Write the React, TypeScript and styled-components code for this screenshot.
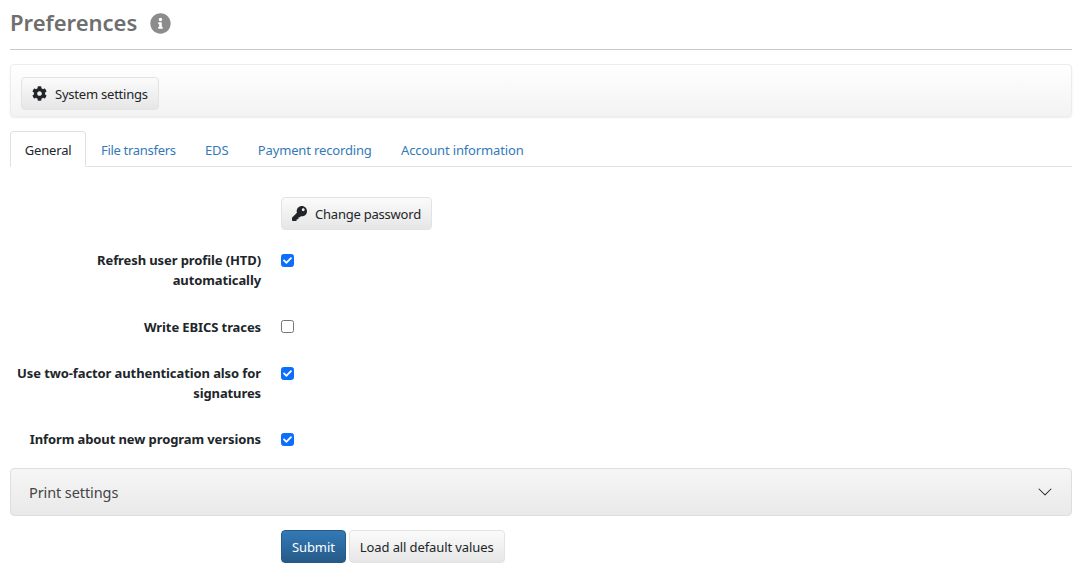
import React from 'react'
import styled, { createGlobalStyle } from 'styled-components'
import { FaCog, FaInfoCircle, FaKey, FaCheck } from 'react-icons/fa'

const GlobalStyle = createGlobalStyle`
  html, body {
    margin: 0;
    padding: 0;
    background: #fff;
    font-family: "Noto Sans", "Open Sans", sans-serif;
    font-size: 13px;
    letter-spacing: -0.1px;
    color: #212529;
  }
`

const Page = styled.div`
  padding: 0 8px 0 10px;
  height: 579px;
  box-sizing: border-box;
  overflow: hidden;
`

const Header = styled.div`
  display: flex;
  align-items: center;
  gap: 13px;
  padding-bottom: 3px;
  box-sizing: border-box;
  border-bottom: 1px solid #c9c9c9;
  height: 50px;
`

const Title = styled.h1`
  margin: 0 0 3px;
  font-size: 22px;
  font-weight: 600;
  letter-spacing: 0;
  color: #6f6f6f;
`

const InfoIcon = styled(FaInfoCircle)`
  width: 21px;
  height: 21px;
  color: #8c8c8c;
`

const Toolbar = styled.div`
  margin-top: 14px;
  height: 53px;
  box-sizing: border-box;
  padding: 12px 10px;
  border: 1px solid #ececec;
  border-radius: 4px;
  background: linear-gradient(#ffffff, #f3f3f3);
  box-shadow: 0 1px 2px rgba(0, 0, 0, 0.08);
`

const Button = styled.button<{ $primary?: boolean }>`
  display: inline-flex;
  align-items: center;
  height: 33px;
  padding: 0 10px;
  gap: 8px;
  border-radius: 4px;
  font-family: inherit;
  font-size: 13px;
  letter-spacing: -0.1px;
  border: 1px solid ${p => (p.$primary ? '#265a88' : '#e3e3e3')};
  color: ${p => (p.$primary ? '#fff' : '#212529')};
  background: ${p =>
    p.$primary
      ? 'linear-gradient(#337ab7, #265a88)'
      : 'linear-gradient(#fbfbfb, #e6e6e6)'};
`

const IconButton = styled(Button)`
  letter-spacing: -0.22px;
`

const Tabs = styled.div`
  margin-top: 14px;
  display: flex;
  height: 36px;
  box-sizing: border-box;
  border-bottom: 1px solid #dee2e6;
`

const Tab = styled.div<{ $active?: boolean, $tight?: boolean }>`
  height: 36px;
  box-sizing: border-box;
  padding: 2px 13.7px 0;
  display: flex;
  align-items: center;
  letter-spacing: ${p => (p.$tight ? '-0.3px' : '-0.15px')};
  color: ${p => (p.$active ? '#212529' : '#337ab7')};
  background: ${p => (p.$active ? '#fff' : 'transparent')};
  border: 1px solid ${p => (p.$active ? '#dee2e6' : 'transparent')};
  border-bottom-color: ${p => (p.$active ? '#fff' : 'transparent')};
  border-radius: 4px 4px 0 0;
`

const Form = styled.div`
  margin-top: 30.25px;
  display: grid;
  grid-template-columns: 251px 1fr;
  column-gap: 20px;
  align-items: start;
`

const Label = styled.label`
  text-align: right;
  font-weight: 700;
  font-size: 13px;
  line-height: 20px;
  margin-bottom: 26.4px;
`

const Cell = styled.div`
  height: 20px;
  display: flex;
  align-items: center;
`

const ButtonCell = styled.div`
  grid-column: 2;
  height: 53px;
`

const Box = styled.span<{ $checked?: boolean }>`
  width: 13px;
  height: 13px;
  box-sizing: border-box;
  border-radius: 2.5px;
  display: flex;
  align-items: center;
  justify-content: center;
  color: #fff;
  background: ${p => (p.$checked ? '#0d6efd' : '#fff')};
  border: 1px solid ${p => (p.$checked ? '#0d6efd' : '#767676')};
`

const Accordion = styled.div`
  margin-top: -7.8px;
  height: 48px;
  box-sizing: border-box;
  display: flex;
  align-items: center;
  justify-content: space-between;
  padding: 0 18px;
  border: 1px solid #dedede;
  border-radius: 4px;
  background: linear-gradient(#f6f6f6, #e9e9e9);
  font-size: 14.5px;
  color: #444;
`

const Chevron = styled.svg`
  width: 16px;
  height: 16px;
  color: #212529;
`

const Actions = styled.div`
  margin-top: 14px;
  margin-left: 271px;
  display: flex;
  gap: 3px;
`

type RowProps = { label: React.ReactNode, checked?: boolean }

const Row: React.FC<RowProps> = ({ label, checked }) => (
  <>
    <Label>{label}</Label>
    <Cell>
      <Box $checked={checked}>{checked ? <FaCheck size={9} /> : null}</Box>
    </Cell>
  </>
)

const App = () => (
  <Page>
    <GlobalStyle />
    <Header>
      <Title>Preferences</Title>
      <InfoIcon />
    </Header>
    <Toolbar>
      <IconButton><FaCog size={15} color="#212529" />System settings</IconButton>
    </Toolbar>
    <Tabs>
      <Tab $active>General</Tab>
      <Tab $tight>File transfers</Tab>
      <Tab>EDS</Tab>
      <Tab>Payment recording</Tab>
      <Tab>Account information</Tab>
    </Tabs>
    <Form>
      <ButtonCell>
        <IconButton><FaKey size={15} color="#212529" />Change password</IconButton>
      </ButtonCell>
      <Row label={<>Refresh user profile (HTD)<br />automatically</>} checked />
      <Row label="Write EBICS traces" />
      <Row label={<>Use two-factor authentication also for<br />signatures</>} checked />
      <Row label="Inform about new program versions" checked />
    </Form>
    <Accordion>
      Print settings
      <Chevron viewBox="0 0 16 16" fill="currentColor">
        <path fillRule="evenodd" d="M1.646 4.646a.5.5 0 0 1 .708 0L8 10.293l5.646-5.647a.5.5 0 0 1 .708.708l-6 6a.5.5 0 0 1-.708 0l-6-6a.5.5 0 0 1 0-.708z" />
      </Chevron>
    </Accordion>
    <Actions>
      <Button $primary>Submit</Button>
      <Button>Load all default values</Button>
    </Actions>
  </Page>
)

export default App
